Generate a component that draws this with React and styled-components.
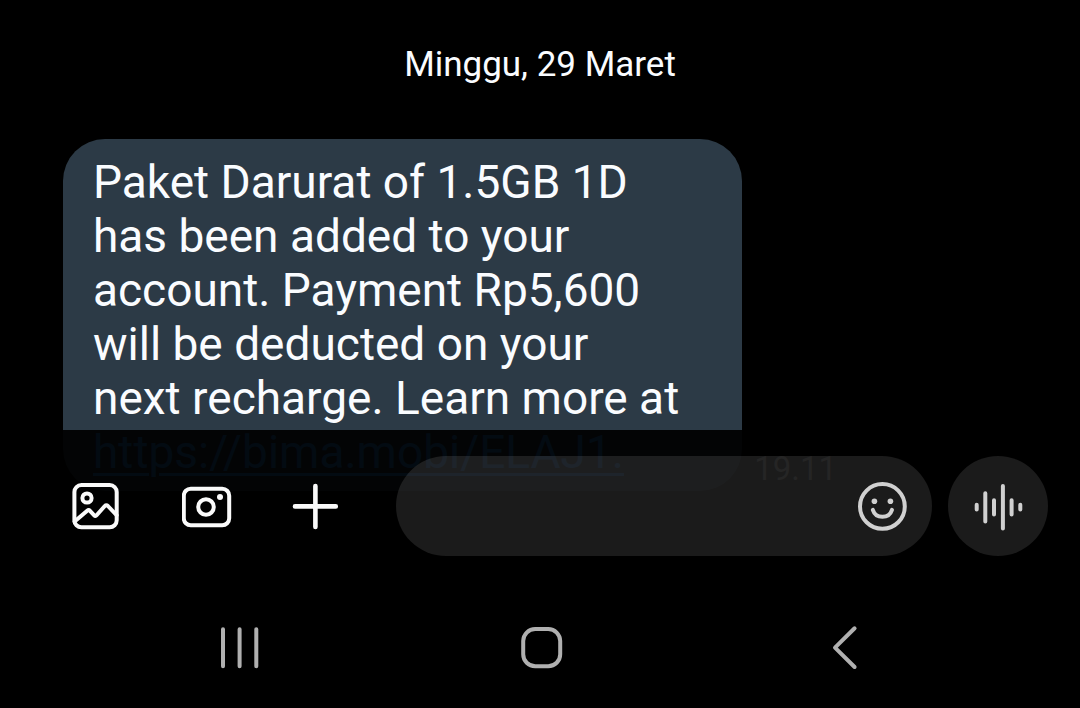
import React, { useState } from "react";
import styled, { createGlobalStyle } from "styled-components";

const GlobalStyle = createGlobalStyle`
  * {
    box-sizing: border-box;
  }

  body {
    margin: 0;
    background: #000;
    color: #fafcff;
    font-family: Roboto, "Liberation Sans", sans-serif;
  }
`;

const Conversation = styled.main`
  padding: 45px 0 200px;
`;

const DateLabel = styled.h2`
  margin: 0 0 54px;
  font-size: 35px;
  font-weight: 400;
  line-height: 40px;
  text-align: center;
`;

const MessageRow = styled.div`
  display: flex;
  align-items: flex-end;
  gap: 12px;
  padding: 0 63px;
`;

const Bubble = styled.p`
  margin: 0;
  padding: 16px 63px 12px 30px;
  border-radius: 42px;
  background: #2c3a46;
  font-size: 46px;
  line-height: 54px;

  a {
    color: #3096ff;
    text-decoration-thickness: 3px;
    text-underline-offset: 5px;
  }
`;

const Time = styled.time`
  color: #9a9a9a;
  font-size: 33px;
  line-height: 44px;
`;

const Dock = styled.footer`
  position: fixed;
  right: 0;
  bottom: 0;
  left: 0;
  background: rgba(0, 0, 0, 0.93);
`;

const Composer = styled.form`
  display: flex;
  align-items: center;
  gap: 16px;
  padding: 26px 32px 0 72px;
`;

const Tools = styled.div`
  display: flex;
  gap: 60px;
  margin-right: 38px;
`;

const IconButton = styled.button`
  display: flex;
  align-items: center;
  justify-content: center;
  flex-shrink: 0;
  padding: 0;
  border: 0;
  background: none;
  color: ${(props) => props.$color || "#fafafa"};
  cursor: pointer;
`;

const VoiceButton = styled(IconButton)`
  width: 100px;
  height: 100px;
  border-radius: 50%;
  background: rgba(255, 255, 255, 0.106);
`;

const InputPill = styled.div`
  display: flex;
  align-items: center;
  flex: 1;
  min-width: 0;
  height: 100px;
  padding: 0 25px 0 40px;
  border-radius: 50px;
  background: rgba(255, 255, 255, 0.106);

  input {
    flex: 1;
    min-width: 0;
    border: 0;
    outline: 0;
    background: none;
    color: inherit;
    font: inherit;
    font-size: 40px;
  }
`;

const NavBar = styled.nav`
  display: grid;
  grid-template-columns: repeat(3, 1fr);
  justify-items: center;
  padding: 67px 88px 35px;
`;

const Svg = styled.svg`
  display: block;
  width: 50px;
  height: 50px;
  fill: none;
  stroke: currentColor;
  stroke-width: 4;
  stroke-linecap: round;
  stroke-linejoin: round;

  .solid {
    fill: currentColor;
    stroke: none;
  }
`;

const Icon = ({ children }) => (
  <Svg viewBox="0 0 50 50" aria-hidden="true">
    {children}
  </Svg>
);

const GalleryIcon = () => (
  <Icon>
    <rect x="2.4" y="4.1" width="42.3" height="42.2" rx="7" />
    <circle cx="15" cy="17" r="4.6" />
    <path d="M2.6 40.6L15.2 29.8Q16.7 28.5 18 29.9L22.2 34.4Q23.4 35.7 24.6 34.3L32.8 25Q34.3 23.4 35.9 25L44.6 34.2" />
  </Icon>
);

const CameraIcon = () => (
  <Icon>
    <rect x="1.8" y="7.7" width="45.4" height="36.6" rx="7" />
    <circle cx="24" cy="26" r="7.8" />
    <circle className="solid" cx="38" cy="16" r="3" />
  </Icon>
);

const PlusIcon = () => (
  <Icon>
    <path strokeWidth="4.6" d="M3 25.4H43.8M23.4 5V46" />
  </Icon>
);

const SmileIcon = () => (
  <Icon>
    <circle cx="25.4" cy="25.4" r="22.4" />
    <circle className="solid" cx="17.4" cy="20.3" r="2.8" />
    <circle className="solid" cx="33.4" cy="20.3" r="2.8" />
    <path d="M15.8 28.8C17.3 33.4 21 35.8 25.4 35.8S33.5 33.4 35 28.8" />
  </Icon>
);

const WaveIcon = () => (
  <Icon>
    <path d="M3.7 23.8V28.6M12.3 12.2V40.5M21 19.2V33.6M29.9 5V47.6M38.6 19.2V33.6M47.3 23.8V28.6" />
  </Icon>
);

const RecentsIcon = () => (
  <Icon>
    <path d="M9 6.2V43.2M25.6 6.2V43.2M42.3 6.2V43.2" />
  </Icon>
);

const HomeIcon = () => (
  <Icon>
    <rect x="8.2" y="6.1" width="37" height="37.2" rx="12" />
  </Icon>
);

const BackIcon = () => (
  <Icon>
    <path d="M38.6 5.3L19 24.6L38.6 44" />
  </Icon>
);

export default function App() {
  const [text, setText] = useState("");

  function handleSubmit(e) {
    e.preventDefault();
    setText("");
  }

  return (
    <>
      <GlobalStyle />
      <Conversation>
        <DateLabel>Minggu, 29 Maret</DateLabel>
        <MessageRow>
          <Bubble>
            Paket Darurat of 1.5GB 1D
            <br />
            has been added to your
            <br />
            account. Payment Rp5,600
            <br />
            will be deducted on your
            <br />
            next recharge. Learn more at
            <br />
            <a href="https://bima.mobi/ELAJ1.">https://bima.mobi/ELAJ1.</a>
          </Bubble>
          <Time>19.11</Time>
        </MessageRow>
      </Conversation>

      <Dock>
        <Composer onSubmit={handleSubmit}>
          <Tools>
            <IconButton type="button" aria-label="Galeri">
              <GalleryIcon />
            </IconButton>
            <IconButton type="button" aria-label="Kamera">
              <CameraIcon />
            </IconButton>
            <IconButton type="button" aria-label="Tambah">
              <PlusIcon />
            </IconButton>
          </Tools>
          <InputPill>
            <input
              type="text"
              aria-label="Pesan"
              value={text}
              onChange={(e) => setText(e.target.value)}
            />
            <IconButton type="button" aria-label="Emoji" $color="#d0d0d0">
              <SmileIcon />
            </IconButton>
          </InputPill>
          <VoiceButton type="button" aria-label="Pesan suara" $color="#d0d0d0">
            <WaveIcon />
          </VoiceButton>
        </Composer>
        <NavBar>
          <IconButton type="button" aria-label="Terbaru" $color="#b0b0b0">
            <RecentsIcon />
          </IconButton>
          <IconButton type="button" aria-label="Beranda" $color="#b0b0b0">
            <HomeIcon />
          </IconButton>
          <IconButton type="button" aria-label="Kembali" $color="#b0b0b0">
            <BackIcon />
          </IconButton>
        </NavBar>
      </Dock>
    </>
  );
}
